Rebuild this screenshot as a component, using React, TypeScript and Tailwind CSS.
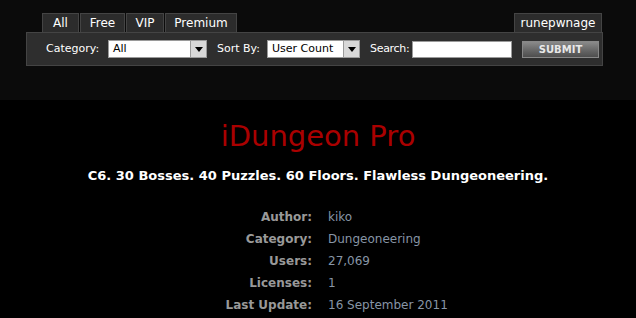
import React from 'react';

const tabs: [string, string][] = [
  ['All', 'w-[37px]'],
  ['Free', 'w-[45px]'],
  ['VIP', 'w-[38px]'],
  ['Premium', 'w-[72px]'],
];

const details: [string, string][] = [
  ['Author:', 'kiko'],
  ['Category:', 'Dungeoneering'],
  ['Users:', '27,069'],
  ['Licenses:', '1'],
  ['Last Update:', '16 September 2011'],
];

const SelectBox: React.FC<{ value: string; width: string }> = ({ value, width }) => (
  <div className={`flex h-[18px] shrink-0 ${width} items-stretch border border-[#9a9a9a] bg-white`}>
    <span className="flex-1 truncate pl-[4px] text-[11px] leading-[16px] text-black">{value}</span>
    <span className="flex w-[16px] items-center justify-center border-l border-[#9a9a9a] bg-[#d8d8d8]">
      <svg width="8" height="5" viewBox="0 0 8 5">
        <path d="M0 0h8L4 5z" fill="#000" />
      </svg>
    </span>
  </div>
);

const App: React.FC = () => {
  return (
    <div className="min-h-screen bg-black font-['DejaVu_Sans',sans-serif]">
      <div className="h-[100px] bg-[#0b0b0b] pt-[13px]">
        <div className="ml-[26px] w-[577px]">
          <div className="flex justify-between pl-[16px] pr-[1px]">
            <div className="flex gap-[1px]">
              {tabs.map(([t, w]) => (
                <div
                  key={t}
                  className={`h-[19px] ${w} border border-b-0 border-[#444] bg-[#2c2c2c] text-center text-[12px] leading-[19px] text-white`}
                >
                  {t}
                </div>
              ))}
            </div>
            <div className="h-[19px] w-[88px] border border-b-0 border-[#444] bg-[#2c2c2c] text-center text-[12px] leading-[19px] text-white">
              runepwnage
            </div>
          </div>
          <div className="flex h-[34px] items-center overflow-hidden whitespace-nowrap border border-[#444] bg-[#2e2e2e] pl-[19px] text-[11px] text-white">
            <span className="w-[62px] shrink-0">Category:</span>
            <SelectBox value="All" width="w-[99px]" />
            <span className="ml-[10px] w-[50px] shrink-0">Sort By:</span>
            <SelectBox value="User Count" width="w-[93px]" />
            <span className="ml-[10px] w-[42px] shrink-0 tracking-[-0.3px]">Search:</span>
            <div className="h-[17px] w-[100px] shrink-0 border border-[#9a9a9a] bg-white" />
            <button className="ml-[10px] h-[17px] w-[77px] shrink-0 border border-[#888] bg-gradient-to-b from-[#8a8a8a] via-[#6a6a6a] to-[#4e4e4e] text-[10px] font-bold leading-[15px] text-[#e8e8e8]">
              SUBMIT
            </button>
          </div>
        </div>
      </div>
      <div className="pt-[20px] text-center">
        <h1 className="text-[29px] leading-[32px] text-[#aa0000]">iDungeon Pro</h1>
        <p className="mt-[14px] text-[13px] font-bold leading-[20px] text-white">
          C6. 30 Bosses. 40 Puzzles. 60 Floors. Flawless Dungeoneering.
        </p>
      </div>
      <div className="mt-[23px] grid grid-cols-[312px_1fr] gap-x-[16px] gap-y-[5px] text-[12px] leading-[17px]">
        {details.map(([k, v]) => (
          <React.Fragment key={k}>
            <span className="text-right font-bold text-[#999]">{k}</span>
            <span className="text-[#8795a6]">{v}</span>
          </React.Fragment>
        ))}
      </div>
    </div>
  );
};

export default App;
